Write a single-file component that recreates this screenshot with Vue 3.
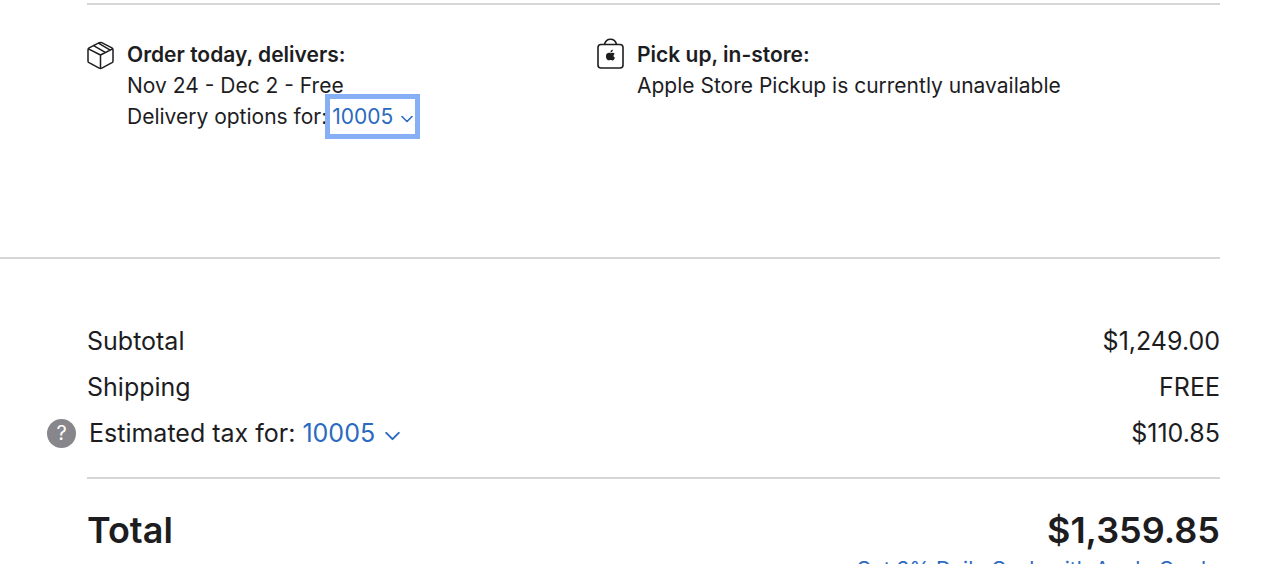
<script setup>
const rows = [
  { label: 'Subtotal', value: '$1,249.00' },
  { label: 'Shipping', value: 'FREE' },
]
</script>

<template>
  <main class="bag">
    <section class="fulfillment">
      <div class="option">
        <svg class="icon" viewBox="0 0 28 32" fill="none" stroke="#1d1d1f" stroke-width="1.5" stroke-linecap="round" stroke-linejoin="round" aria-hidden="true">
          <path d="M12.300 3.700Q13.500 3.100 14.700 3.700L24.900 8.900Q26 9.500 26 10.700V21.900Q26 23.100 25 23.700L14.800 29.100Q13.500 29.700 12.200 29.100L2 23.700Q1 23.100 1 21.900V10.700Q1 9.500 2.100 8.900ZM1.400 9.800 13.500 16 25.600 9.800M13.500 16V29M6.600 6.600 18.300 13.300M11.400 4.200 22.800 10.800" />
        </svg>
        <div>
          <h2>Order today, delivers:</h2>
          <p>Nov 24 - Dec 2 - Free</p>
          <p>Delivery options for:<button class="zip focused" type="button">10005<svg class="chevron" viewBox="0 0 12 8" aria-hidden="true"><path d="M1 1.500 6 6.500 11 1.500" /></svg></button></p>
        </div>
      </div>
      <div class="option">
        <svg class="icon" viewBox="0 0 28 32" fill="none" stroke="#1d1d1f" stroke-width="1.600" aria-hidden="true">
          <rect x="1" y="5.500" width="25" height="23.500" rx="3" />
          <path class="handle" d="M7.500 5.500C9-1.600 18-1.600 19.500 5.500" />
          <path fill="#1d1d1f" stroke="none" d="M13.500 14.200c1.900-.9 3.200-.7 4.200.5-1.700 1.100-1.500 3.300.3 4.100-.8 2.100-2 3-3.300 2.400-.8-.4-1.400-.4-2.200 0-1.900.8-3.800-2-3.500-4.500.3-2.400 2.400-3.400 4.500-2.500M13.400 13.600c0-1.600.9-2.800 2.400-3.100.1 1.700-.8 2.900-2.400 3.100" />
        </svg>
        <div>
          <h2>Pick up, in-store:</h2>
          <p>Apple Store Pickup is currently unavailable</p>
        </div>
      </div>
    </section>
    <section class="summary">
      <dl>
        <div v-for="row in rows" :key="row.label" class="row">
          <dt>{{ row.label }}</dt><dd>{{ row.value }}</dd>
        </div>
        <div class="row">
          <dt class="tax"><button class="help" type="button" aria-label="About estimated tax">?</button>Estimated tax for: <button class="zip" type="button">10005<svg class="chevron large" viewBox="0 0 12 8" aria-hidden="true"><path d="M1 1.500 6 6.500 11 1.500" /></svg></button></dt>
          <dd>$110.85</dd>
        </div>
        <div class="row total"><dt>Total</dt><dd>$1,359.85</dd></div>
      </dl>
      <a class="cash" href="#">Get 3% Daily Cash with Apple Card ›</a>
    </section>
  </main>
</template>

<style>
html, body { overflow: hidden; height: 100%; }
#app { height: 100%; overflow: hidden; }
</style>
<style scoped>
.bag { padding: 3px 60px 0 0; color: #1d1d1f; font-family: Inter, "Liberation Sans", sans-serif; background: #fff; }
.fulfillment { display: grid; grid-template-columns: 510fr 623fr; margin-left: 87px; padding: 34px 0 125px; border-top: 2px solid #d6d6d6; }
.option { display: flex; gap: 12px; font-size: 21px; line-height: 31px; }
.icon { width: 28px; height: 32px; flex: none; overflow: visible; }
h2, p, dl, dd { margin: 0; }
h2 { font-size: 21px; font-weight: 600; }
.zip { border: 0; padding: 0; background: none; color: #2b6ac0; font: inherit; }
.focused { margin: -2px 0 -2px 3px; padding: 2px; outline: 5px solid #86aff5; }
.chevron { width: 12px; height: 8px; margin-left: 8px; fill: none; stroke: currentColor; stroke-width: 1.6; stroke-linecap: round; stroke-linejoin: round; vertical-align: 1px; }
.large { width: 15px; height: 10px; margin-left: 10px; }
.summary { padding: 59px 0 0 87px; border-top: 2px solid #d6d6d6; }
.row { display: flex; justify-content: space-between; font-size: 25px; line-height: 46px; }
.tax { position: relative; padding-left: 2px; }
.help { position: absolute; left: -40px; top: 9px; width: 29px; height: 29px; border: 0; border-radius: 50%; padding: 0; color: #fff; background: #86868b; font: 400 20px/29px Inter, sans-serif; }
.total { margin-top: 21px; padding-top: 28px; border-top: 2px solid #d6d6d6; font-size: 36px; font-weight: 600; }
.cash { display: block; margin-top: 2px; text-align: right; font-size: 21px; line-height: 30px; color: #2b6ac0; text-decoration: none; }
</style>
